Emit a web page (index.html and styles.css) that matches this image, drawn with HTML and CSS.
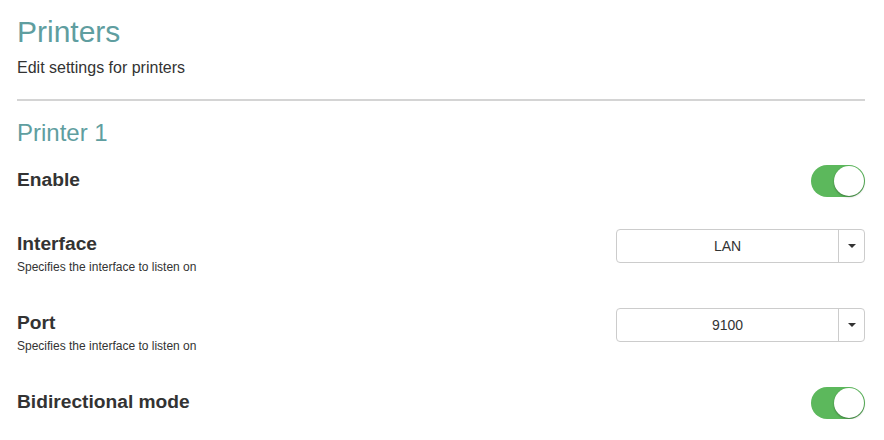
FILE: index.html
```html
<!DOCTYPE html>
<html lang="en">
<head>
  <meta charset="UTF-8">
  <title>Printers</title>
  <meta name="viewport" content="width=device-width, initial-scale=1">
  <link rel="stylesheet" href="styles.css">
</head>
<body>
  <div class="page">
    <h1>Printers</h1>
    <p class="lead">Edit settings for printers</p>
    <hr>

    <h2>Printer 1</h2>

    <div class="fields">
      <div class="field">
        <div class="field-label">
          <div class="field-title">Enable</div>
        </div>
        <span class="switch on"><span class="knob"></span></span>
      </div>

      <div class="field">
        <div class="field-label">
          <div class="field-title">Interface</div>
          <div class="field-help">Specifies the interface to listen on</div>
        </div>
        <div class="select">
          <span class="select-value">LAN</span>
          <span class="select-btn"><span class="caret"></span></span>
        </div>
      </div>

      <div class="field">
        <div class="field-label">
          <div class="field-title">Port</div>
          <div class="field-help">Specifies the interface to listen on</div>
        </div>
        <div class="select">
          <span class="select-value">9100</span>
          <span class="select-btn"><span class="caret"></span></span>
        </div>
      </div>

      <div class="field">
        <div class="field-label">
          <div class="field-title">Bidirectional mode</div>
        </div>
        <span class="switch on"><span class="knob"></span></span>
      </div>
    </div>
  </div>
</body>
</html>
```

FILE: styles.css
```css
body {
  margin: 0;
  font-family: "Liberation Sans", Arial, sans-serif;
  color: #333;
  background-color: #fff;
}
.page {
  padding: 15px 19px 0 17px;
}
h1 {
  margin: 0;
  font-size: 30px;
  font-weight: normal;
  line-height: 33px;
  color: #5f9ea0;
}
.lead {
  margin: 9px 0 0;
  font-size: 16px;
  line-height: 22px;
}
hr {
  margin: 20px 0 0;
  border: none;
  height: 2px;
  background-color: #d4d4d4;
}
h2 {
  margin: 19px 0 0;
  font-size: 24px;
  font-weight: normal;
  line-height: 26px;
  color: #5f9ea0;
}
.fields {
  display: flex;
  flex-direction: column;
  gap: 32px;
  margin-top: 19px;
}
.field {
  display: flex;
  justify-content: space-between;
  align-items: flex-start;
}
.field-title {
  font-size: 19.2px;
  font-weight: bold;
  line-height: 30px;
}
.field-help {
  font-size: 12px;
  line-height: 17px;
}
.switch {
  display: flex;
  justify-content: flex-end;
  align-items: center;
  box-sizing: border-box;
  width: 54px;
  height: 32px;
  padding: 1px;
  border-radius: 16px;
  background-color: #5cb85c;
}
.knob {
  width: 30px;
  height: 30px;
  border-radius: 50%;
  background-color: #fff;
  box-shadow: 0 1px 2px rgba(0, 0, 0, 0.35);
}
.select {
  display: flex;
  box-sizing: border-box;
  width: 249px;
  height: 34px;
  border: 1px solid #ccc;
  border-radius: 4px;
  font-size: 14px;
}
.select-value {
  flex: 1;
  display: flex;
  align-items: center;
  justify-content: center;
}
.select-btn {
  display: flex;
  align-items: center;
  justify-content: center;
  width: 25px;
  border-left: 1px solid #ccc;
}
.caret {
  width: 0;
  height: 0;
  border-top: 4px solid #333;
  border-left: 4px solid transparent;
  border-right: 4px solid transparent;
}
```
